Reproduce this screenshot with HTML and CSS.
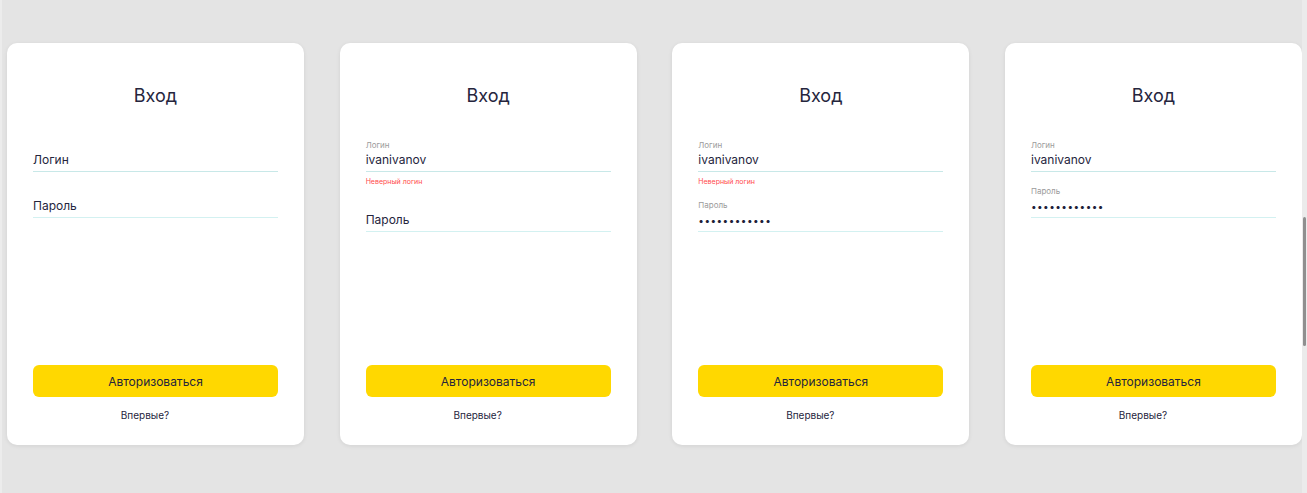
FILE: index.html
```html
<!DOCTYPE html>
<html lang="ru">
<head>
<meta charset="utf-8">
<title>Вход</title>
<link rel="stylesheet" href="styles.css">
</head>
<body>
<div class="page">
  <div class="cards">
    <form class="card">
      <h1 class="title">Вход</h1>
      <div class="fields">
        <div class="field">
          <span class="label label-hidden">Логин</span>
          <span class="value placeholder">Логин</span>
        </div>
        <div class="field field-empty">
          <span class="label label-hidden">Пароль</span>
          <span class="value placeholder">Пароль</span>
        </div>
      </div>
      <button type="button" class="btn">Авторизоваться</button>
      <a class="link">Впервые?</a>
    </form>

    <form class="card">
      <h1 class="title">Вход</h1>
      <div class="fields">
        <div class="field-wrap">
          <div class="field">
            <span class="label">Логин</span>
            <span class="value">ivanivanov</span>
          </div>
          <div class="error">Неверный логин</div>
        </div>
        <div class="field field-empty">
          <span class="label label-hidden">Пароль</span>
          <span class="value placeholder">Пароль</span>
        </div>
      </div>
      <button type="button" class="btn">Авторизоваться</button>
      <a class="link">Впервые?</a>
    </form>

    <form class="card">
      <h1 class="title">Вход</h1>
      <div class="fields">
        <div class="field-wrap">
          <div class="field">
            <span class="label">Логин</span>
            <span class="value">ivanivanov</span>
          </div>
          <div class="error">Неверный логин</div>
        </div>
        <div class="field field-empty">
          <span class="label">Пароль</span>
          <span class="value dots">••••••••••••</span>
        </div>
      </div>
      <button type="button" class="btn">Авторизоваться</button>
      <a class="link">Впервые?</a>
    </form>

    <form class="card">
      <h1 class="title">Вход</h1>
      <div class="fields">
        <div class="field">
          <span class="label">Логин</span>
          <span class="value">ivanivanov</span>
        </div>
        <div class="field field-empty">
          <span class="label">Пароль</span>
          <span class="value dots">••••••••••••</span>
        </div>
      </div>
      <button type="button" class="btn">Авторизоваться</button>
      <a class="link">Впервые?</a>
    </form>
  </div>
  <div class="scrollbar"><div class="thumb"></div></div>
</div>
</body>
</html>
```

FILE: styles.css
```css
* { box-sizing: border-box; }

html, body {
  margin: 0;
  padding: 0;
  height: 100%;
  overflow: hidden;
}

body {
  background: #e4e4e4;
  font-family: Inter, "Noto Sans", sans-serif;
  color: #25253d;
}

.page {
  position: relative;
  height: 493px;
  border-left: 2px solid #ececec;
  padding: 43px 0 0 5px;
}

.cards {
  display: flex;
  gap: 35.67px;
}

.card {
  width: 297px;
  height: 402px;
  flex: 0 0 297px;
  background: #ffffff;
  border-radius: 10px;
  box-shadow: 0 1px 4px rgba(0, 0, 0, 0.08);
  display: flex;
  flex-direction: column;
  align-items: stretch;
  padding: 41px 26px 23px;
  margin: 0;
}

.title {
  margin: 0;
  font-size: 18px;
  font-weight: 400;
  line-height: 24px;
  text-align: center;
  color: #25253d;
}

.fields {
  margin-top: 32px;
  display: flex;
  flex-direction: column;
  gap: 14px;
}

.field {
  display: flex;
  flex-direction: column;
  padding-bottom: 3px;
  border-bottom: 1px solid #c8e8e8;
}

.field-empty {
  border-bottom-color: #d3f1f1;
}

.label {
  font-size: 8px;
  line-height: 10px;
  color: #9b9b9b;
  margin-bottom: 2px;
}

.label-hidden {
  visibility: hidden;
}

.value {
  font-size: 12px;
  line-height: 16px;
  color: #25253d;
}

.placeholder {
  color: #25253d;
}

.dots {
  font-size: 10px;
  letter-spacing: 0.45px;
  color: #1f1f3a;
}

.error {
  margin-top: 6px;
  font-size: 7px;
  line-height: 8px;
  color: #ff4a4a;
}

.btn {
  margin-top: auto;
  height: 32px;
  border: none;
  border-radius: 6px;
  background: #ffd800;
  font-family: Inter, "Noto Sans", sans-serif;
  font-size: 12px;
  color: #25253d;
  cursor: pointer;
}

.link {
  margin-top: 11px;
  padding-right: 21px;
  text-align: center;
  font-size: 10px;
  line-height: 14px;
  color: #25253d;
}

.scrollbar {
  position: absolute;
  top: 0;
  right: 0;
  width: 5px;
  height: 100%;
  background: #ebebeb;
}

.thumb {
  position: absolute;
  top: 217px;
  left: 1px;
  width: 3px;
  height: 129px;
  border-radius: 2px;
  background: #8f8f8f;
}
```
